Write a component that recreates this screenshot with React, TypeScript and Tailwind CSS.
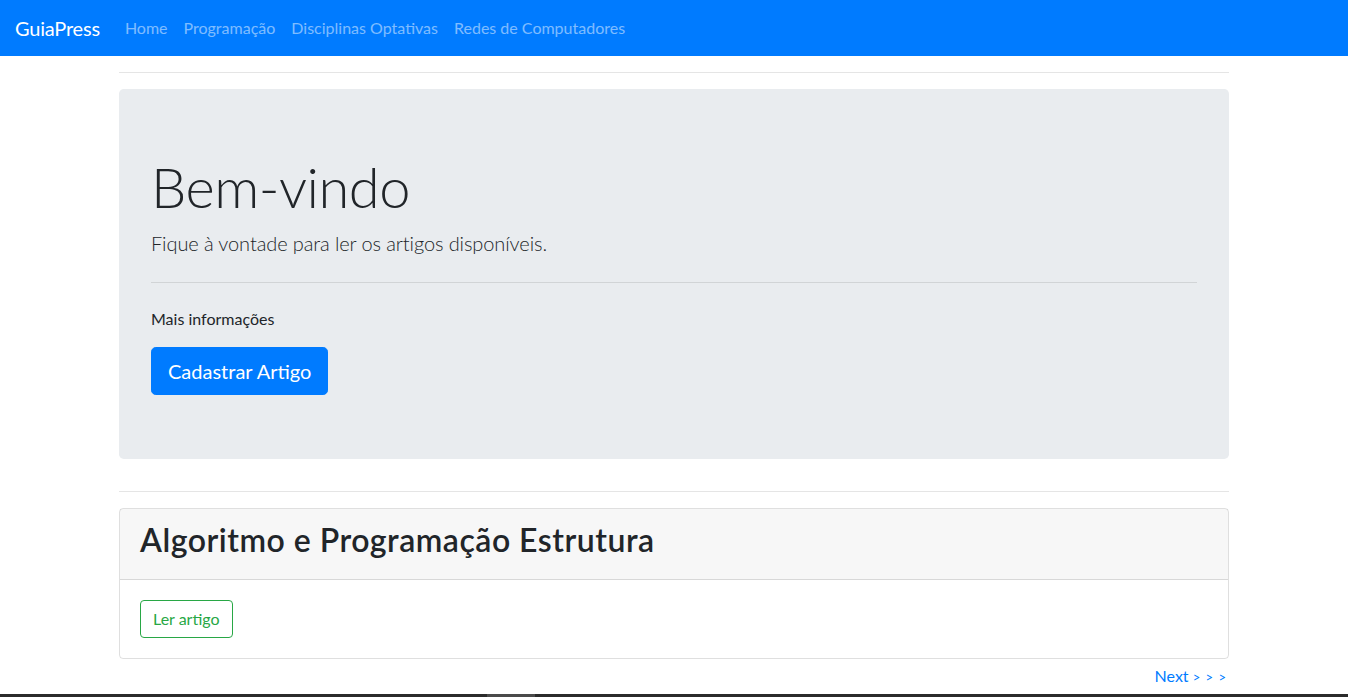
import React from "react";

export default function App() {
  const font = { fontFamily: '"Segoe UI", Lato, "Noto Sans", sans-serif' };
  return (
    <div className="min-h-[697px] flex flex-col bg-white text-[#212529] text-base leading-6" style={font}>
      <nav className="h-14 bg-[#007bff] flex items-center pl-[15px] pr-4 shrink-0">
        <a className="text-white text-[20px] leading-[30px] py-[5px] mr-4 whitespace-nowrap tracking-[-0.2px]">GuiaPress</a>
        <div className="flex ml-px">
          {["Home", "Programação", "Disciplinas Optativas", "Redes de Computadores"].map((l) => (
            <a key={l} className="px-2 py-2 text-white/50 whitespace-nowrap">
              {l}
            </a>
          ))}
        </div>
      </nav>
      <main className="flex-1 w-[1110px] mx-auto">
        <hr className="mt-4 mb-4 border-0 border-t border-black/10" />
        <section className="bg-[#e9ecef] rounded-[4.8px] px-8 py-16">
          <h1 className="text-[56px] leading-[1.2] font-light mb-2 tracking-[-0.5px]">Bem-vindo</h1>
          <p className="text-[20px] leading-[30px] font-light tracking-[-0.1px]">Fique à vontade para ler os artigos disponíveis.</p>
          <hr className="my-6 border-0 border-t border-black/10" />
          <p className="mb-4">Mais informações</p>
          <a className="inline-block bg-[#007bff] border border-[#007bff] text-white text-[20px] leading-[30px] px-4 py-2 rounded-[4.8px]">
            Cadastrar Artigo
          </a>
        </section>
        <hr className="mt-8 mb-4 border-0 border-t border-black/10" />
        <div className="border border-black/[0.125] rounded">
          <div className="bg-black/[0.03] px-5 pt-3 pb-3 border-b border-black/[0.125]">
            <h2 className="text-[32px] leading-[38px] font-semibold mb-2 tracking-[0.5px]">Algoritmo e Programação Estrutura</h2>
          </div>
          <div className="p-5">
            <a className="inline-block border border-[#28a745] text-[#28a745] px-3 py-[6px] leading-6 rounded">
              Ler artigo
            </a>
          </div>
        </div>
        <div className="flex justify-end pt-[5px] pr-[2px]">
          <a className="text-[#007bff] whitespace-nowrap">
            Next <span className="text-[13px] tracking-[1px]">&gt; &gt; &gt;</span>
          </a>
        </div>
      </main>
      <div className="h-[3px] bg-[#2b2b2b] flex shrink-0">
        <div className="ml-[487px] w-[48px] bg-[#4a4a4a]" />
      </div>
    </div>
  );
}
